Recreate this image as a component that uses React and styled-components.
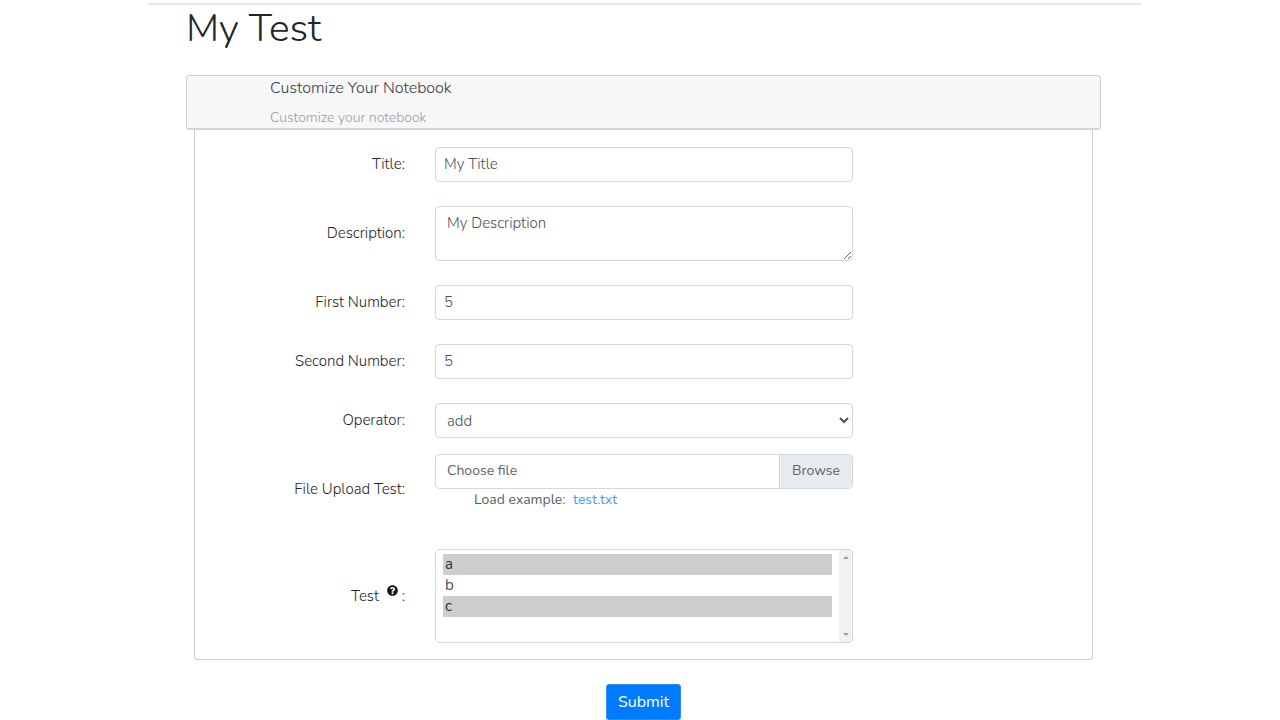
import React from "react";
import styled, { createGlobalStyle } from "styled-components";
import { FaQuestionCircle } from "react-icons/fa";

const GlobalStyle = createGlobalStyle`
  *, *::before, *::after { box-sizing: border-box; }
  body {
    margin: 0;
    padding-left: 9px;
    background: #fff;
    color: #212529;
    font-family: Nunito, Lato, "Open Sans", sans-serif;
    font-size: 15px;
    font-weight: 300;
    line-height: 21px;
  }
  button, input, select, textarea { font: inherit; }
`;

const Page = styled.main`
  width: 80%;
  max-width: 993px;
  margin: 3px auto 0;
  padding: 0 40px 0 38px;
  border-top: 2px solid #e6e6e6;
`;

const PageTitle = styled.h1`
  margin: 0 0 22px;
  font-size: 39px;
  font-weight: 350;
  line-height: 48px;
`;

const SectionHeader = styled.header`
  padding: 1px 83px 0;
  height: 55px;
  border: 1px solid #cdcdcd;
  border-bottom: 2px solid #d4d4d4;
  border-radius: 4px;
  background: #f7f7f7;
`;

const SectionTitle = styled.h2`
  margin: 0 0 8px;
  color: #383c40;
  font-size: 16px;
  font-weight: 300;
  line-height: 22px;
`;

const SectionHint = styled.p`
  margin: 0;
  color: #999da1;
  font-size: 14px;
`;

const SectionBody = styled.div`
  margin: 0 8px;
  padding: 17px 0 16px;
  border: 1px solid #cdcdcd;
  border-top: 0;
  border-radius: 0 0 4px 4px;
`;

const Row = styled.div`
  display: grid;
  grid-template-columns: 210fr 418fr 209fr;
  column-gap: 30px;
  align-items: center;
  margin-bottom: ${(p) => p.$space ?? 24}px;
`;

const Label = styled.label`
  text-align: right;
  color: #212529;
`;

const HelpMark = styled.sup`
  display: inline-block;
  margin: 0 4px;
  vertical-align: 5px;
  line-height: 11px;
  font-size: 11px;
  color: #111;
`;

const Input = styled.input`
  width: 100%;
  height: 35px;
  padding: 0 8px 2px;
  border: 1px solid #d3d8dd;
  border-radius: 4px;
  color: #495057;
  background: #fff;
`;

const TextArea = styled.textarea`
  display: block;
  width: 100%;
  height: 55px;
  padding: 6px 11px;
  border: 1px solid #d3d8dd;
  border-radius: 4px;
  color: #495057;
  background: #fff;
  resize: vertical;
`;

const Select = styled.select`
  width: 100%;
  height: 35px;
  padding: 0 0 0 7px;
  border: 1px solid #d3d8dd;
  border-radius: 4px;
  color: #495057;
  background: #fff;
`;

const FileField = styled.div`
  padding-bottom: 15px;
  font-size: 14px;
  font-weight: 400;
`;

const FilePicker = styled.label`
  display: flex;
  position: relative;
  height: 35px;
  border: 1px solid #d3d8dd;
  border-radius: 4px;
  overflow: hidden;
  color: #5d646b;
  line-height: 31px;
`;

const FileInput = styled.input`
  position: absolute;
  inset: 0;
  width: 100%;
  opacity: 0;
`;

const FileName = styled.span`
  flex: 1;
  padding-left: 11px;
`;

const Browse = styled.span`
  padding: 0 12px;
  border-left: 1px solid #d3d8dd;
  background: #e9ecef;
`;

const Example = styled.p`
  margin: 0;
  padding-left: 39px;
  color: #5a5e62;
`;

const ExampleLink = styled.a`
  margin-left: 4px;
  color: #4a9cf5;
  text-decoration: none;
`;

const ListFrame = styled.div`
  display: flex;
  height: 94px;
  border: 1px solid #d3d8dd;
  border-radius: 4px;
  overflow: hidden;
`;

const ListBox = styled.select`
  flex: 1;
  min-width: 0;
  padding: 4px 7px;
  border: 0;
  outline: 0;
  color: #495057;
  background: #fff;
  overflow: hidden;
`;

const Option = styled.option`
  height: 21px;
  min-height: 21px;
  padding: 0 2px;
  line-height: 21px;
  &:checked {
    color: #333;
    background: #cecece linear-gradient(#cecece, #cecece);
  }
`;

const ScrollTrack = styled.div`
  display: flex;
  flex-direction: column;
  justify-content: space-between;
  align-items: center;
  width: 13px;
  padding: 5px 0;
  background: #f1f1f1;
`;

const Actions = styled.div`
  display: flex;
  justify-content: center;
  padding-top: 24px;
`;

const SubmitButton = styled.button`
  height: 36px;
  padding: 0 11px;
  border: 1px solid #2d8cff;
  border-radius: 3px;
  color: #fff;
  background: #007bff;
  font-size: 16px;
  font-weight: 400;
`;

function Field({ id, label, space, children }) {
  return (
    <Row $space={space}>
      <Label htmlFor={id}>{label}</Label>
      {children}
    </Row>
  );
}

export default function App() {
  return (
    <>
      <GlobalStyle />
      <Page>
        <PageTitle>My Test</PageTitle>
        <form onSubmit={(e) => e.preventDefault()}>
          <SectionHeader>
            <SectionTitle>Customize Your Notebook</SectionTitle>
            <SectionHint>Customize your notebook</SectionHint>
          </SectionHeader>
          <SectionBody>
            <Field id="title" label="Title:">
              <Input id="title" type="text" defaultValue="My Title" />
            </Field>
            <Field id="description" label="Description:">
              <TextArea id="description" defaultValue="My Description" />
            </Field>
            <Field id="first" label="First Number:">
              <Input id="first" type="text" inputMode="numeric" defaultValue="5" />
            </Field>
            <Field id="second" label="Second Number:">
              <Input id="second" type="text" inputMode="numeric" defaultValue="5" />
            </Field>
            <Field id="operator" label="Operator:" space={16}>
              <Select id="operator" defaultValue="add">
                <option value="add">add</option>
              </Select>
            </Field>
            <Field id="upload" label="File Upload Test:">
              <FileField>
                <FilePicker>
                  <FileInput id="upload" type="file" />
                  <FileName>Choose file</FileName>
                  <Browse>Browse</Browse>
                </FilePicker>
                <Example>
                  Load example: <ExampleLink href="#test.txt">test.txt</ExampleLink>
                </Example>
              </FileField>
            </Field>
            <Field
              id="test"
              space={0}
              label={
                <>
                  Test{" "}
                  <HelpMark>
                    <FaQuestionCircle aria-hidden="true" />
                  </HelpMark>
                  :
                </>
              }
            >
              <ListFrame>
                <ListBox id="test" multiple size={4} defaultValue={["a", "c"]}>
                  <Option value="a">a</Option>
                  <Option value="b">b</Option>
                  <Option value="c">c</Option>
                </ListBox>
                <ScrollTrack aria-hidden="true">
                  <svg width="6" height="4" viewBox="0 0 6 4">
                    <path d="M0 4L3 1L6 4Z" fill="#a3a3a3" />
                  </svg>
                  <svg width="6" height="4" viewBox="0 0 6 4">
                    <path d="M0 0L3 3L6 0Z" fill="#a3a3a3" />
                  </svg>
                </ScrollTrack>
              </ListFrame>
            </Field>
          </SectionBody>
          <Actions>
            <SubmitButton type="submit">Submit</SubmitButton>
          </Actions>
        </form>
      </Page>
    </>
  );
}
